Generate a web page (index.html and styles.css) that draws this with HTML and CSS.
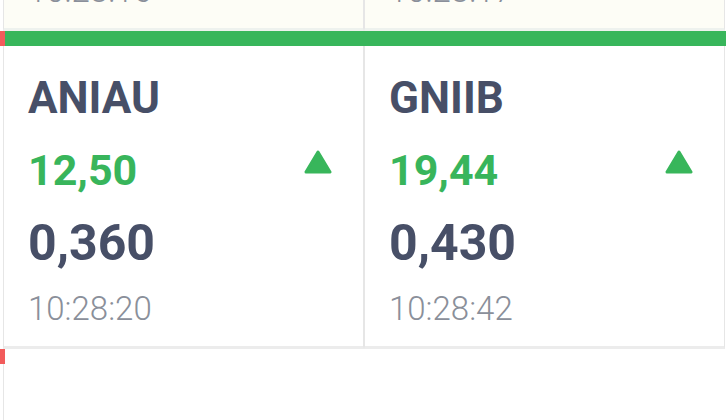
FILE: index.html
```html
<!DOCTYPE html>
<html lang="en">
<head>
  <meta charset="UTF-8" />
  <meta name="viewport" content="width=device-width, initial-scale=1.0"/>
  <title>Ticker Feed</title>
  <link rel="stylesheet" href="styles.css">
</head>
<body>

  <div class="viewport">
    <div class="feed">

      <!-- Previous tick (already flashed) -->
      <div class="row">
        <div class="strip">
          <div class="mark"></div>
          <div class="bar"></div>
        </div>
        <div class="cards">
          <div class="card seen">
            <div class="symbol">BRKLA</div>
            <div class="change-row">
              <span class="change up">8,12</span>
              <svg class="arrow" width="28" height="24" viewBox="0 0 28 24"><path d="M14 2 L26 22 L2 22 Z"/></svg>
            </div>
            <div class="price">1,240</div>
            <div class="time">10:28:16</div>
          </div>
          <div class="card seen">
            <div class="symbol">TMSCO</div>
            <div class="change-row">
              <span class="change up">4,05</span>
              <svg class="arrow" width="28" height="24" viewBox="0 0 28 24"><path d="M14 2 L26 22 L2 22 Z"/></svg>
            </div>
            <div class="price">2,780</div>
            <div class="time">10:28:17</div>
          </div>
        </div>
      </div>

      <!-- Latest tick -->
      <div class="row">
        <div class="strip">
          <div class="mark"></div>
          <div class="bar up"></div>
        </div>
        <div class="cards">
          <div class="card">
            <div class="symbol">ANIAU</div>
            <div class="change-row">
              <span class="change up">12,50</span>
              <svg class="arrow" width="28" height="24" viewBox="0 0 28 24"><path d="M14 2 L26 22 L2 22 Z"/></svg>
            </div>
            <div class="price">0,360</div>
            <div class="time">10:28:20</div>
          </div>
          <div class="card">
            <div class="symbol">GNIIB</div>
            <div class="change-row">
              <span class="change up">19,44</span>
              <svg class="arrow" width="28" height="24" viewBox="0 0 28 24"><path d="M14 2 L26 22 L2 22 Z"/></svg>
            </div>
            <div class="price">0,430</div>
            <div class="time">10:28:42</div>
          </div>
        </div>
      </div>

      <!-- Next tick (still loading) -->
      <div class="row">
        <div class="strip">
          <div class="mark"></div>
          <div class="bar"></div>
        </div>
        <div class="pending"></div>
      </div>

    </div>
  </div>

</body>
</html>
```

FILE: styles.css
```css
body {
  margin: 0;
  font-family: Roboto, 'Noto Sans', sans-serif;
  background-color: #ffffff;
}

.viewport {
  height: 420px;
  overflow: hidden;
}

/* list is scrolled so the previous row only peeks in at the top */
.feed {
  margin-top: -287px;
}

.strip {
  display: flex;
  height: 15px;
}

.mark {
  width: 5px;
  background-color: #f25b5b;
}

.bar {
  flex: 1;
}

.bar.up {
  background-color: #38b65b;
}

.cards {
  display: grid;
  grid-template-columns: 1fr 1fr;
  padding-left: 3px;
  padding-right: 1px;
}

.card {
  background-color: #ffffff;
  border-left: 1px solid #e6e6e6;
  border-right: 1px solid #e6e6e6;
  border-bottom: 3px solid #ececec;
  padding: 27px 31px 18px 24px;
}

.card.seen {
  background-color: #fdfdf6;
  border-bottom-color: #eef2ee;
}

.pending {
  height: 120px;
  margin-left: 3px;
  border-left: 1px solid #e6e6e6;
}

.symbol {
  font-size: 44px;
  font-weight: bold;
  line-height: 50px;
  color: #474f67;
}

.change-row {
  display: flex;
  justify-content: space-between;
  align-items: flex-start;
  margin-top: 22px;
  height: 50px;
}

.change {
  font-size: 43px;
  font-weight: bold;
  line-height: 50px;
}

.change.up {
  color: #38b55b;
}

.arrow {
  margin-top: 5px;
}

.arrow path {
  fill: #38b65b;
  stroke: #38b65b;
  stroke-width: 3;
  stroke-linejoin: round;
}

.price {
  margin-top: 20px;
  font-size: 50px;
  font-weight: bold;
  line-height: 56px;
  color: #474f67;
}

.time {
  margin-top: 19px;
  font-size: 33px;
  font-weight: 300;
  line-height: 38px;
  color: #8a8f9a;
}
```
